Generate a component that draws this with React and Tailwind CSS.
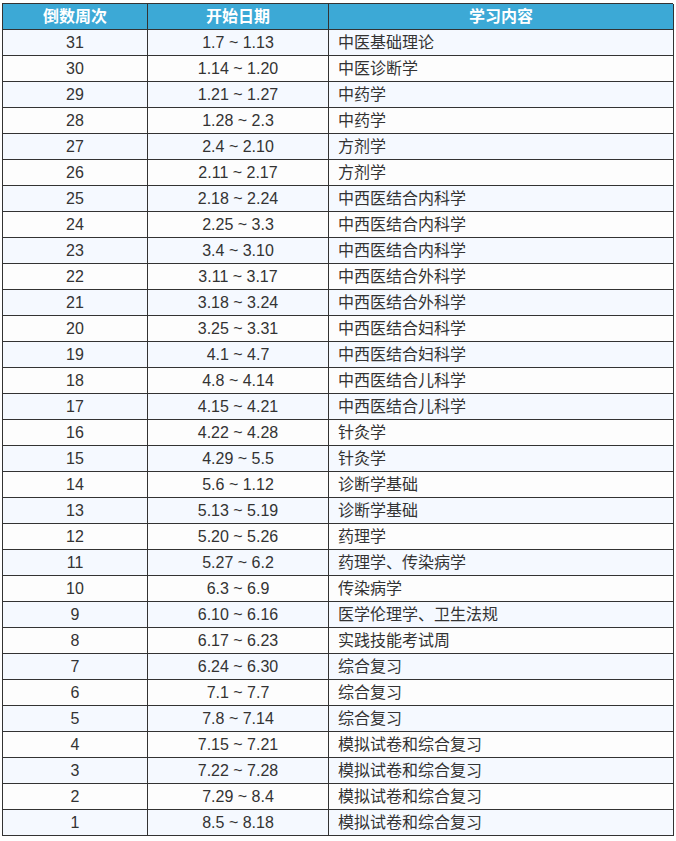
import React from "react";

const rows = [
  ["31", "1.7 ~ 1.13", "中医基础理论"],
  ["30", "1.14 ~ 1.20", "中医诊断学"],
  ["29", "1.21 ~ 1.27", "中药学"],
  ["28", "1.28 ~ 2.3", "中药学"],
  ["27", "2.4 ~ 2.10", "方剂学"],
  ["26", "2.11 ~ 2.17", "方剂学"],
  ["25", "2.18 ~ 2.24", "中西医结合内科学"],
  ["24", "2.25 ~ 3.3", "中西医结合内科学"],
  ["23", "3.4 ~ 3.10", "中西医结合内科学"],
  ["22", "3.11 ~ 3.17", "中西医结合外科学"],
  ["21", "3.18 ~ 3.24", "中西医结合外科学"],
  ["20", "3.25 ~ 3.31", "中西医结合妇科学"],
  ["19", "4.1 ~ 4.7", "中西医结合妇科学"],
  ["18", "4.8 ~ 4.14", "中西医结合儿科学"],
  ["17", "4.15 ~ 4.21", "中西医结合儿科学"],
  ["16", "4.22 ~ 4.28", "针灸学"],
  ["15", "4.29 ~ 5.5", "针灸学"],
  ["14", "5.6 ~ 1.12", "诊断学基础"],
  ["13", "5.13 ~ 5.19", "诊断学基础"],
  ["12", "5.20 ~ 5.26", "药理学"],
  ["11", "5.27 ~ 6.2", "药理学、传染病学"],
  ["10", "6.3 ~ 6.9", "传染病学"],
  ["9", "6.10 ~ 6.16", "医学伦理学、卫生法规"],
  ["8", "6.17 ~ 6.23", "实践技能考试周"],
  ["7", "6.24 ~ 6.30", "综合复习"],
  ["6", "7.1 ~ 7.7", "综合复习"],
  ["5", "7.8 ~ 7.14", "综合复习"],
  ["4", "7.15 ~ 7.21", "模拟试卷和综合复习"],
  ["3", "7.22 ~ 7.28", "模拟试卷和综合复习"],
  ["2", "7.29 ~ 8.4", "模拟试卷和综合复习"],
  ["1", "8.5 ~ 8.18", "模拟试卷和综合复习"],
];

export default function App() {
  return (
    <div className="min-h-[841px] w-[676px] bg-white pt-[3px] pl-[2px] font-['Liberation_Sans','Noto_Sans_CJK_SC',sans-serif] text-[16px] text-[#333]">
      <div className="grid w-[671px] grid-cols-[145px_181px_345px] border-l border-t border-[#333]">
        <div className="flex h-[26px] items-center justify-center border-b border-r border-[#333] bg-[#3ca9d6] font-bold text-white">倒数周次</div>
        <div className="flex h-[26px] items-center justify-center border-b border-r border-[#333] bg-[#3ca9d6] font-bold text-white">开始日期</div>
        <div className="flex h-[26px] items-center justify-center border-b border-r border-[#333] bg-[#3ca9d6] font-bold text-white">学习内容</div>
        {rows.map((r, i) => {
          const bg = i % 2 === 0 ? "bg-[#f5f9ff]" : "bg-[#fdfdfd]";
          return (
            <React.Fragment key={i}>
              <div className={`flex h-[26px] items-center justify-center border-b border-r border-[#333] ${bg}`}>{r[0]}</div>
              <div className={`flex h-[26px] items-center justify-center border-b border-r border-[#333] ${bg}`}>{r[1]}</div>
              <div className={`flex h-[26px] items-center border-b border-r border-[#333] pl-[9px] ${bg}`}>{r[2]}</div>
            </React.Fragment>
          );
        })}
      </div>
    </div>
  );
}
